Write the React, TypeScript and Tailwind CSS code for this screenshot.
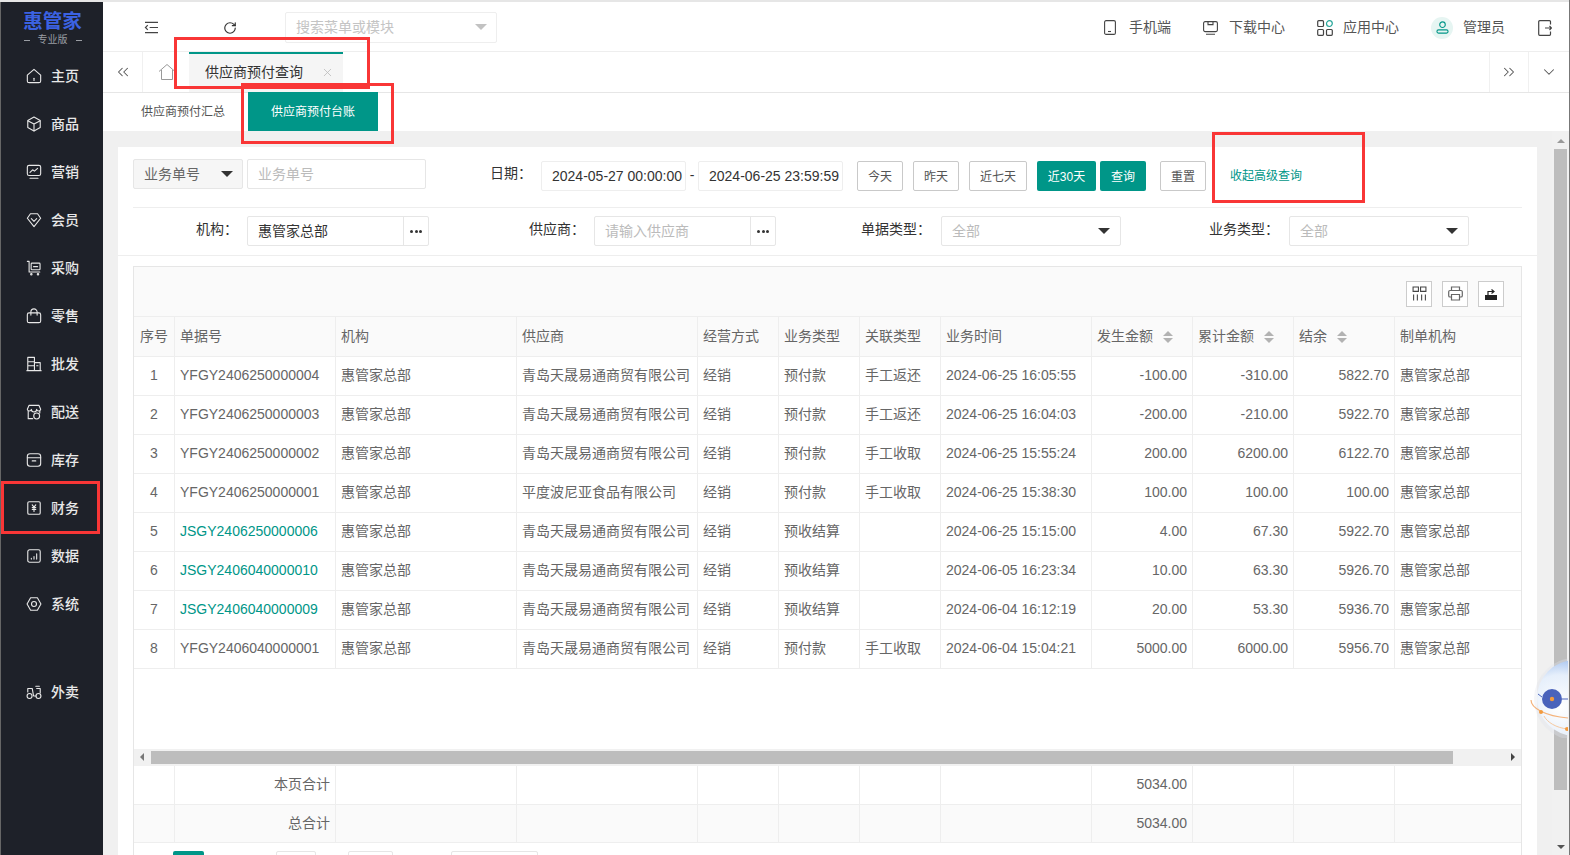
import type { ReactNode } from "react";
import { ChevronDown, ChevronsLeft, ChevronsRight, RotateCw, X } from "lucide-react";

const font = "font-['Liberation_Sans','Noto_Sans_CJK_SC',sans-serif]";

function Ico({ children, className = "w-[16px] h-[16px]" }: { children: ReactNode; className?: string }) {
  return (
    <svg viewBox="0 0 18 18" fill="none" stroke="currentColor" strokeWidth="1.25" strokeLinejoin="round" strokeLinecap="round" className={className}>
      {children}
    </svg>
  );
}

const menu = [
  {
    label: "主页",
    icon: (
      <Ico>
        <path d="M1.5 8 9 1.5 16.500 8v6.500a2 2 0 0 1-2 2h-11a2 2 0 0 1-2-2z" />
        <path d="M9 11.500v2.500" />
      </Ico>
    ),
  },
  {
    label: "商品",
    icon: (
      <Ico>
        <path d="M9 1.200 16 5v8l-7 3.800L2 13V5z" />
        <path d="M2.500 5.500 9 9l6.500-3.500M9 9v7.500" />
      </Ico>
    ),
  },
  {
    label: "营销",
    icon: (
      <Ico>
        <rect x="1.500" y="1.500" width="15" height="11.500" rx="2" />
        <path d="m4.500 9.500 3-3 2 1.500 3.500-3M4.500 16h9" />
      </Ico>
    ),
  },
  {
    label: "会员",
    icon: (
      <Ico>
        <path d="M5 2h8l3.500 5L9 16.500 1.500 7z" />
        <path d="m6 7.500 3 3 3-3" />
      </Ico>
    ),
  },
  {
    label: "采购",
    icon: (
      <Ico>
        <path d="M1.500 1.500h2v12h12" />
        <rect x="5.800" y="3.500" width="10" height="7.500" rx="1" />
        <path d="M8.500 7.500h4.500" />
        <circle cx="6" cy="16" r=".8" />
        <circle cx="13.500" cy="16" r=".8" />
      </Ico>
    ),
  },
  {
    label: "零售",
    icon: (
      <Ico>
        <rect x="1.500" y="5.500" width="15" height="11" rx="2" />
        <path d="M5.500 8V4.500a3.500 3.500 0 0 1 7 0V8" />
      </Ico>
    ),
  },
  {
    label: "批发",
    icon: (
      <Ico>
        <path d="M2 16.500V1.500h7.500v15M9.500 7.500h6.500v9M1 16.500h16M2 6.500h7.500M2 11h7.500M12 11h1.500" />
      </Ico>
    ),
  },
  {
    label: "配送",
    icon: (
      <Ico>
        <path d="M3.500 1.500h11L16.500 6a2.300 2.300 0 0 1-4.500 0 2.300 2.300 0 0 1-6 0 2.300 2.300 0 0 1-4.500 0z" />
        <path d="M2.500 8v8.500h5M15.500 8v2" />
        <circle cx="12" cy="13.500" r="3.300" />
      </Ico>
    ),
  },
  {
    label: "库存",
    icon: (
      <Ico>
        <rect x="1.500" y="2" width="15" height="14" rx="3" />
        <path d="M1.500 6.500h15M7 10h4" />
      </Ico>
    ),
  },
  {
    label: "财务",
    icon: (
      <Ico>
        <rect x="2" y="2" width="14" height="14" rx="1.500" />
        <path d="m7 5.500 2 2.500 2-2.500M9 8v5M7 8.500h4M7 10.500h4" />
      </Ico>
    ),
  },
  {
    label: "数据",
    icon: (
      <Ico>
        <rect x="2" y="2" width="14" height="14" rx="2" />
        <path d="M6 12.500v-1M9 12.500V9.500M12 12.500V6.500" />
      </Ico>
    ),
  },
  {
    label: "系统",
    icon: (
      <Ico>
        <path d="M5.200 2h7.600L16.800 9l-4 7H5.200l-4-7z" />
        <circle cx="9" cy="9" r="2.800" />
      </Ico>
    ),
  },
];

const rows = [
  ["1", "YFGY2406250000004", "青岛天晟易通商贸有限公司", "预付款", "手工返还", "2024-06-25 16:05:55", "-100.00", "-310.00", "5822.70"],
  ["2", "YFGY2406250000003", "青岛天晟易通商贸有限公司", "预付款", "手工返还", "2024-06-25 16:04:03", "-200.00", "-210.00", "5922.70"],
  ["3", "YFGY2406250000002", "青岛天晟易通商贸有限公司", "预付款", "手工收取", "2024-06-25 15:55:24", "200.00", "6200.00", "6122.70"],
  ["4", "YFGY2406250000001", "平度波尼亚食品有限公司", "预付款", "手工收取", "2024-06-25 15:38:30", "100.00", "100.00", "100.00"],
  ["5", "JSGY2406250000006", "青岛天晟易通商贸有限公司", "预收结算", "", "2024-06-25 15:15:00", "4.00", "67.30", "5922.70"],
  ["6", "JSGY2406040000010", "青岛天晟易通商贸有限公司", "预收结算", "", "2024-06-05 16:23:34", "10.00", "63.30", "5926.70"],
  ["7", "JSGY2406040000009", "青岛天晟易通商贸有限公司", "预收结算", "", "2024-06-04 16:12:19", "20.00", "53.30", "5936.70"],
  ["8", "YFGY2406040000001", "青岛天晟易通商贸有限公司", "预付款", "手工收取", "2024-06-04 15:04:21", "5000.00", "6000.00", "5956.70"],
];

function Cols() {
  return (
    <colgroup>
      <col className="w-[40.500px]" />
      <col className="w-[161px]" />
      <col className="w-[181px]" />
      <col className="w-[181px]" />
      <col className="w-[81px]" />
      <col className="w-[81px]" />
      <col className="w-[81px]" />
      <col className="w-[151px]" />
      <col className="w-[101px]" />
      <col className="w-[101px]" />
      <col className="w-[101px]" />
      <col className="w-[126.500px]" />
    </colgroup>
  );
}

function Sort() {
  return (
    <span className="ml-[10px] inline-flex flex-col gap-[2px] align-middle">
      <span className="w-0 h-0 border-x-[5px] border-x-transparent border-b-[5px] border-b-[#b2b2b2]" />
      <span className="w-0 h-0 border-x-[5px] border-x-transparent border-t-[5px] border-t-[#b2b2b2]" />
    </span>
  );
}

function Caret() {
  return <span className="w-0 h-0 border-x-[6px] border-x-transparent border-t-[6px] border-t-[#333]" />;
}

function FilterBtn({ children, w, primary }: { children: ReactNode; w: string; primary?: boolean }) {
  return (
    <button
      className={`${w} h-[30px] mt-[2px] pt-[1px] rounded-[2px] text-[12px] ${
        primary ? "bg-[#009688] text-white" : "bg-white border border-[#c9c9c9] text-[#555]"
      }`}
    >
      {children}
    </button>
  );
}

function Field({ label, w, children }: { label: string; w: string; children: ReactNode }) {
  return (
    <>
      <span className={`${w} text-right text-[#333] pr-[1px] -mt-[3px]`}>{label}</span>
      {children}
    </>
  );
}

function Lookup({ value, w, placeholder }: { value: string; w: string; placeholder?: boolean }) {
  return (
    <div className="flex h-[30px] ml-[8px] border border-[#e6e6e6] rounded-[2px] bg-white">
      <div className={`${w} pl-[10px] leading-[28px] ${placeholder ? "text-[#bbb]" : "text-[#333]"}`}>{value}</div>
      <div className="w-[25px] border-l border-[#e6e6e6] flex items-center justify-center gap-[1.500px]">
        <i className="w-[3px] h-[3px] rounded-full bg-[#333]" />
        <i className="w-[3px] h-[3px] rounded-full bg-[#333]" />
        <i className="w-[3px] h-[3px] rounded-full bg-[#333]" />
      </div>
    </div>
  );
}

function SelectBox() {
  return (
    <div className="w-[180px] h-[30px] ml-[9px] px-[10px] border border-[#e6e6e6] rounded-[2px] flex items-center justify-between text-[#bbb]">
      全部
      <Caret />
    </div>
  );
}

export default function App() {
  const cell = "border-r border-b border-[#eee] px-[5px] overflow-hidden";
  return (
    <div className={`relative w-[1570px] h-[855px] overflow-hidden flex flex-col bg-white text-[14px] border-r border-[#777] ${font}`}>
      <div className="h-[2px] bg-[#e6e6e6] shrink-0" />
      <div className="flex flex-1 min-h-0">
        {/* sidebar */}
        <aside className="w-[103px] shrink-0 bg-[#1e2129] border-l border-[#666] text-[#e8e8e8]">
          <div className="h-[50px] flex flex-col items-center pt-[9px] pl-[1px]">
            <div className="text-[19.500px] leading-[21px] font-bold text-[#3b62e2] whitespace-nowrap">惠管家</div>
            <div className="mt-[1px] text-[10px] leading-[14px] text-[#9a9da3] flex items-center gap-[8px]">
              <i className="w-[6px] h-px bg-[#9a9da3]" />专业版<i className="w-[6px] h-px bg-[#9a9da3]" />
            </div>
          </div>
          {menu.map((m) => (
            <div key={m.label} className="h-12 flex items-center pl-[25px] gap-[9px] font-medium">
              {m.icon}
              <span>{m.label}</span>
            </div>
          ))}
          <div className="h-12 mt-10 flex items-center pl-[25px] gap-[9px] font-medium">
            <Ico>
              <circle cx="4" cy="13.500" r="2.800" />
              <circle cx="14" cy="13.500" r="2.800" />
              <path d="M2 9V5h5l1.500 8.500h3M11 2.500h4M12 5h4v5" />
            </Ico>
            <span>外卖</span>
          </div>
        </aside>

        <div className="flex-1 min-w-0 flex flex-col">
          {/* top bar */}
          <header className="h-[50px] shrink-0 pt-[2px] border-b border-[#eee] flex items-center text-[#555] whitespace-nowrap">
            <svg viewBox="0 0 16 14" className="w-[15px] h-[13px] ml-[41px] text-[#444]" fill="none" stroke="currentColor" strokeWidth="1.300">
              <path d="M1 1.500h14M6 7h9M1 12.500h14M4 4.500 1.500 7 4 9.500" />
            </svg>
            <RotateCw className="w-[14px] h-[14px] ml-[64px] text-[#333]" strokeWidth={2} />
            <div className="ml-[48px] -mt-[1px] w-[212px] h-[31px] border border-[#eee] rounded-[2px] flex items-center justify-between pl-[10px] pr-[9px] text-[#c4c4c4]">
              搜索菜单或模块
              <span className="w-0 h-0 border-x-[6px] border-x-transparent border-t-[6px] border-t-[#c2c2c2]" />
            </div>
            <svg viewBox="0 0 12 15" className="ml-[607px] w-[12px] h-[15px]" fill="none" stroke="#444" strokeWidth="1.100">
              <rect x=".6" y=".6" width="10.800" height="13.800" rx="1.500" />
              <path d="M4 11.500h3" />
            </svg>
            <span className="ml-[13px]">手机端</span>
            <svg viewBox="0 0 15 14" className="ml-[32px] w-[15px] h-[14px]" fill="none" stroke="#444" strokeWidth="1.100">
              <rect x=".6" y=".6" width="13.800" height="10" rx="1.500" />
              <path d="M3 13.300h9M5 .6v3h5v-3" />
            </svg>
            <span className="ml-[11px]">下载中心</span>
            <svg viewBox="0 0 16 16" className="ml-[32px] w-[16px] h-[16px]" fill="none" stroke="#444" strokeWidth="1.200">
              <rect x=".7" y=".7" width="5.800" height="5.800" rx="1" />
              <rect x=".7" y="9.500" width="5.800" height="5.800" rx="1" />
              <rect x="9.500" y="9.500" width="5.800" height="5.800" rx="1" />
              <circle cx="12.400" cy="3.600" r="2.900" stroke="#26a69a" />
            </svg>
            <span className="ml-[10px]">应用中心</span>
            <span className="ml-[32px] w-[22px] h-[22px] rounded-full bg-[#e6f5f2] flex items-center justify-center">
              <svg viewBox="0 0 14 14" className="w-[13px] h-[13px]" fill="none" stroke="#009688" strokeWidth="1.200">
                <circle cx="7" cy="4" r="3" />
                <rect x="1" y="9.500" width="12" height="3.500" rx="1.700" />
              </svg>
            </span>
            <span className="ml-[10px]">管理员</span>
            <svg viewBox="0 0 14 16" className="ml-[33px] w-[14px] h-[16px]" fill="none" stroke="#444" strokeWidth="1.200">
              <path d="M12.500 4.500V1.700a1 1 0 0 0-1-1H1.700a1 1 0 0 0-1 1v12.600a1 1 0 0 0 1 1h9.800a1 1 0 0 0 1-1v-2.800M7 8h6.500M11.500 6l2 2-2 2" />
            </svg>
          </header>

          {/* tab strip */}
          <div className="h-[41px] shrink-0 border-b border-[#e6e6e6] flex text-[#333] whitespace-nowrap">
            <div className="w-[40px] border-r border-[#f0f0f0] flex items-center justify-center">
              <ChevronsLeft className="w-[18px] h-[18px] text-[#555]" strokeWidth={1.4} />
            </div>
            <div className="w-[46px] flex items-center justify-center pl-[1px]">
              <svg viewBox="0 0 18 18" className="w-[18px] h-[18px]" fill="none" stroke="#999" strokeWidth="1">
                <path d="M1 8.500 9 1.500l8 7M3.500 7v9.500h11V7" />
              </svg>
            </div>
            <div className="w-[154px] bg-[#f5f5f5] border-t-2 border-[#009688] flex items-center pl-[16px] pb-[1px]">
              供应商预付查询
              <X className="w-[13px] h-[13px] ml-[18px] text-[#bbb]" strokeWidth={1.5} />
            </div>
            <div className="flex-1" />
            <div className="w-[40px] border-x border-[#f0f0f0] flex items-center justify-center">
              <ChevronsRight className="w-[18px] h-[18px] text-[#555]" strokeWidth={1.4} />
            </div>
            <div className="w-[40px] flex items-center justify-center">
              <ChevronDown className="w-[18px] h-[18px] text-[#555]" strokeWidth={1.4} />
            </div>
          </div>

          {/* sub tabs */}
          <div className="h-[38px] shrink-0 flex text-[12px] whitespace-nowrap pl-[38px]">
            <div className="leading-[38px] text-[#555]">供应商预付汇总</div>
            <div className="ml-[23px] -mt-px w-[130px] h-[39px] bg-[#009688] text-white text-center leading-[41px]">供应商预付台账</div>
          </div>

          {/* content */}
          <div className="flex-1 min-h-0 flex bg-[#f0f0f0]">
            <div className="flex-1 min-w-0 px-[15px] pt-[16px] overflow-hidden">
              <div className="bg-white h-[900px] w-[1419px]">
                <div className="h-[60px] px-[15px] pt-[12px]">
                  <div className="h-[48px] flex items-start whitespace-nowrap">
                    <div className="w-[110px] h-[30px] bg-[#f6f6f6] border border-[#e6e6e6] rounded-[2px] flex items-center justify-between pl-[10px] pr-[9px] text-[#666]">
                      业务单号
                      <Caret />
                    </div>
                    <div className="w-[179px] h-[30px] ml-[4px] pl-[10px] border border-[#e6e6e6] rounded-[2px] leading-[28px] text-[#bbb]">业务单号</div>
                    <span className="ml-[64px] text-[#333] leading-[28px]">日期：</span>
                    <div className="w-[145px] h-[30px] ml-[9px] mt-[2px] pl-[10px] border border-[#eee] rounded-[2px] leading-[28px] text-[#333]">2024-05-27 00:00:00</div>
                    <span className="w-[12px] mt-[2px] text-center leading-[28px] text-[#333]">-</span>
                    <div className="w-[145px] h-[30px] mt-[2px] pl-[10px] border border-[#eee] rounded-[2px] leading-[28px] text-[#333]">2024-06-25 23:59:59</div>
                    <div className="ml-[14px] flex items-start">
                      <FilterBtn w="w-[46px]">今天</FilterBtn>
                      <span className="w-[10px]" />
                      <FilterBtn w="w-[46px]">昨天</FilterBtn>
                      <span className="w-[10px]" />
                      <FilterBtn w="w-[58px]">近七天</FilterBtn>
                      <span className="w-[10px]" />
                      <FilterBtn w="w-[59px]" primary>近30天</FilterBtn>
                      <span className="w-[4px]" />
                      <FilterBtn w="w-[46px]" primary>查询</FilterBtn>
                      <span className="w-[14px]" />
                      <FilterBtn w="w-[46px]">重置</FilterBtn>
                    </div>
                    <span className="ml-[24px] mt-[3px] leading-[28px] text-[12px] text-[#009688]">收起高级查询</span>
                  </div>
                </div>
                <div className="mx-[15px] h-px bg-[#eee]" />
                <div className="h-[48px] border-b border-[#eee] px-[15px] pt-[8px] flex items-start whitespace-nowrap">
                  <div className="flex items-center h-[30px] w-full">
                    <Field label="机构：" w="w-[106px]">
                      <Lookup value="惠管家总部" w="w-[155px]" />
                    </Field>
                    <Field label="供应商：" w="w-[157px]">
                      <Lookup value="请输入供应商" w="w-[155px]" placeholder />
                    </Field>
                    <Field label="单据类型：" w="w-[156px]">
                      <SelectBox />
                    </Field>
                    <Field label="业务类型：" w="w-[159px]">
                      <SelectBox />
                    </Field>
                  </div>
                </div>

                {/* table */}
                <div className="mt-[10px] mx-[15px] border-x border-t border-[#e6e6e6]">
                  <div className="h-[50px] pt-[4px] bg-[#fafafa] border-b border-[#eee] flex items-center justify-end gap-[10px] pr-[17px]">
                    <span className="w-[26px] h-[26px] border border-[#ccc] bg-white flex items-center justify-center">
                      <svg viewBox="0 0 14 14" className="w-[15px] h-[15px]" fill="none" stroke="#444" strokeWidth="1">
                        <path d="M1 1h5v4H1zM8 1h5v4H8zM1.500 8v5.500M5 8v5.500M9 8v5.500M12.500 8v5.500" />
                      </svg>
                    </span>
                    <span className="w-[26px] h-[26px] border border-[#ccc] bg-white flex items-center justify-center">
                      <svg viewBox="0 0 15 15" className="w-[15px] h-[15px]" fill="none" stroke="#666" strokeWidth="1.200">
                        <path d="M3.500 4.500V1h8v3.500M3.500 11H2a1.300 1.300 0 0 1-1.300-1.300V5.800A1.300 1.300 0 0 1 2 4.500h11a1.300 1.300 0 0 1 1.300 1.300v3.900A1.300 1.300 0 0 1 13 11h-1.500M3.500 8.500h8V14h-8z" />
                      </svg>
                    </span>
                    <span className="w-[26px] h-[26px] border border-[#ccc] bg-white flex items-center justify-center">
                      <svg viewBox="0 0 14 14" className="w-[14px] h-[14px]">
                        <path d="M1 8h12v5H1z" fill="#222" />
                        <path d="M4 8V4.500h5M7.500 2.500 10 4.500 7.500 6.500" fill="none" stroke="#222" strokeWidth="1.200" />
                      </svg>
                    </span>
                  </div>
                  <table className="table-fixed w-[1387px] text-[#666]">
                    <Cols />
                    <thead>
                      <tr className="h-[39px] bg-[#fafafa] text-left">
                        <th className={`${cell} font-normal text-center`}>序号</th>
                        <th className={`${cell} font-normal`}>单据号</th>
                        <th className={`${cell} font-normal`}>机构</th>
                        <th className={`${cell} font-normal`}>供应商</th>
                        <th className={`${cell} font-normal`}>经营方式</th>
                        <th className={`${cell} font-normal`}>业务类型</th>
                        <th className={`${cell} font-normal`}>关联类型</th>
                        <th className={`${cell} font-normal`}>业务时间</th>
                        <th className={`${cell} font-normal`}>发生金额<Sort /></th>
                        <th className={`${cell} font-normal`}>累计金额<Sort /></th>
                        <th className={`${cell} font-normal`}>结余<Sort /></th>
                        <th className="border-b border-[#eee] px-[5px] font-normal">制单机构</th>
                      </tr>
                    </thead>
                    <tbody>
                      {rows.map((r) => (
                        <tr key={r[0]} className="h-[39px] whitespace-nowrap">
                          <td className={`${cell} text-center`}>{r[0]}</td>
                          <td className={`${cell} ${r[1].startsWith("JS") ? "text-[#009688]" : ""}`}>{r[1]}</td>
                          <td className={cell}>惠管家总部</td>
                          <td className={cell}>{r[2]}</td>
                          <td className={cell}>经销</td>
                          <td className={cell}>{r[3]}</td>
                          <td className={cell}>{r[4]}</td>
                          <td className={cell}>{r[5]}</td>
                          <td className={`${cell} text-right`}>{r[6]}</td>
                          <td className={`${cell} text-right`}>{r[7]}</td>
                          <td className={`${cell} text-right`}>{r[8]}</td>
                          <td className="border-b border-[#eee] px-[5px]">惠管家总部</td>
                        </tr>
                      ))}
                    </tbody>
                  </table>
                  <div className="h-[80px]" />
                  <div className="h-[17px] bg-[#f1f1f1] flex items-center">
                    <span className="ml-[6px] w-0 h-0 border-y-[4px] border-y-transparent border-r-[4px] border-r-[#777]" />
                    <span className="ml-[7px] w-[1302px] h-[13px] bg-[#bdbdbd]" />
                    <span className="ml-auto mr-[6px] w-0 h-0 border-y-[4px] border-y-transparent border-l-[4px] border-l-[#444]" />
                  </div>
                  <table className="table-fixed w-[1387px] text-[#666]">
                    <Cols />
                    <tbody>
                      {[
                        ["本页合计", ""],
                        ["总合计", "bg-[#fafafa]"],
                      ].map(([name, bg]) => (
                        <tr key={name} className={`h-[38.500px] ${bg}`}>
                          <td className={cell} />
                          <td className={`${cell} text-right`}>{name}</td>
                          <td className={cell} />
                          <td className={cell} />
                          <td className={cell} />
                          <td className={cell} />
                          <td className={cell} />
                          <td className={cell} />
                          <td className={`${cell} text-right`}>5034.00</td>
                          <td className={cell} />
                          <td className={cell} />
                          <td className="border-b border-[#eee]" />
                        </tr>
                      ))}
                    </tbody>
                  </table>
                  <div className="h-[40px] pt-[8px] flex items-start">
                    <span className="ml-[39px] w-[31px] h-[30px] rounded-[2px] bg-[#009688]" />
                    <span className="ml-[72px] w-[40px] h-[30px] rounded-[2px] border border-[#e6e6e6]" />
                    <span className="ml-[32px] w-[45px] h-[30px] rounded-[2px] border border-[#e6e6e6]" />
                    <span className="ml-[58px] w-[87px] h-[30px] rounded-[2px] border border-[#e6e6e6]" />
                  </div>
                </div>
              </div>
            </div>

            {/* page scrollbar */}
            <div className="w-[17px] shrink-0 bg-[#f1f1f1] flex flex-col items-center">
              <span className="mt-[8px] w-0 h-0 border-x-[4px] border-x-transparent border-b-[4px] border-b-[#999]" />
              <span className="mt-[6px] w-[13px] h-[641px] bg-[#bdbdbd]" />
              <span className="mt-auto mb-[6px] w-0 h-0 border-x-[4px] border-x-transparent border-t-[4px] border-t-[#555]" />
            </div>
          </div>
        </div>
      </div>

      {/* floating assistant */}
      <svg viewBox="0 0 40 80" className="absolute right-[1px] top-[658px] w-[40px] h-[80px]">
        <defs>
          <radialGradient id="ball" cx="30%" cy="62%" r="85%">
            <stop offset="0%" stopColor="#ffffff" />
            <stop offset="50%" stopColor="#e6effb" />
            <stop offset="100%" stopColor="#6f9de4" />
          </radialGradient>
        </defs>
        <circle cx="47" cy="41" r="41" fill="#dfe3ea" opacity=".35" />
        <circle cx="47" cy="40" r="38" fill="url(#ball)" />
        <circle cx="24" cy="41" r="10" fill="#4a63bb" />
        <circle cx="24" cy="41" r="2.200" fill="#f39a3d" />
        <path d="M34 41h6M10 36l4 3" stroke="#4a63bb" strokeWidth="1" />
        <path d="M3 42c0 8 14 16 37 18" fill="none" stroke="#f4b27a" strokeWidth="1.200" />
        <path d="M16 58c3 6 12 12 24 13" fill="none" stroke="#f6c9a0" strokeWidth="1" />
        <circle cx="13" cy="54" r="2" fill="#f39a3d" />
        <circle cx="39" cy="71" r="2" fill="#f39a3d" />
      </svg>

      {/* annotations */}
      <div className="absolute left-[174px] top-[37px] w-[196px] h-[52px] border-[3px] border-[#f93636]" />
      <div className="absolute left-[241px] top-[83px] w-[153px] h-[61px] border-[3px] border-[#f93636]" />
      <div className="absolute left-[1212px] top-[132px] w-[153px] h-[71px] border-[3px] border-[#f93636]" />
      <div className="absolute left-[1px] top-[481px] w-[99px] h-[53px] border-[3px] border-[#f93636]" />
    </div>
  );
}
